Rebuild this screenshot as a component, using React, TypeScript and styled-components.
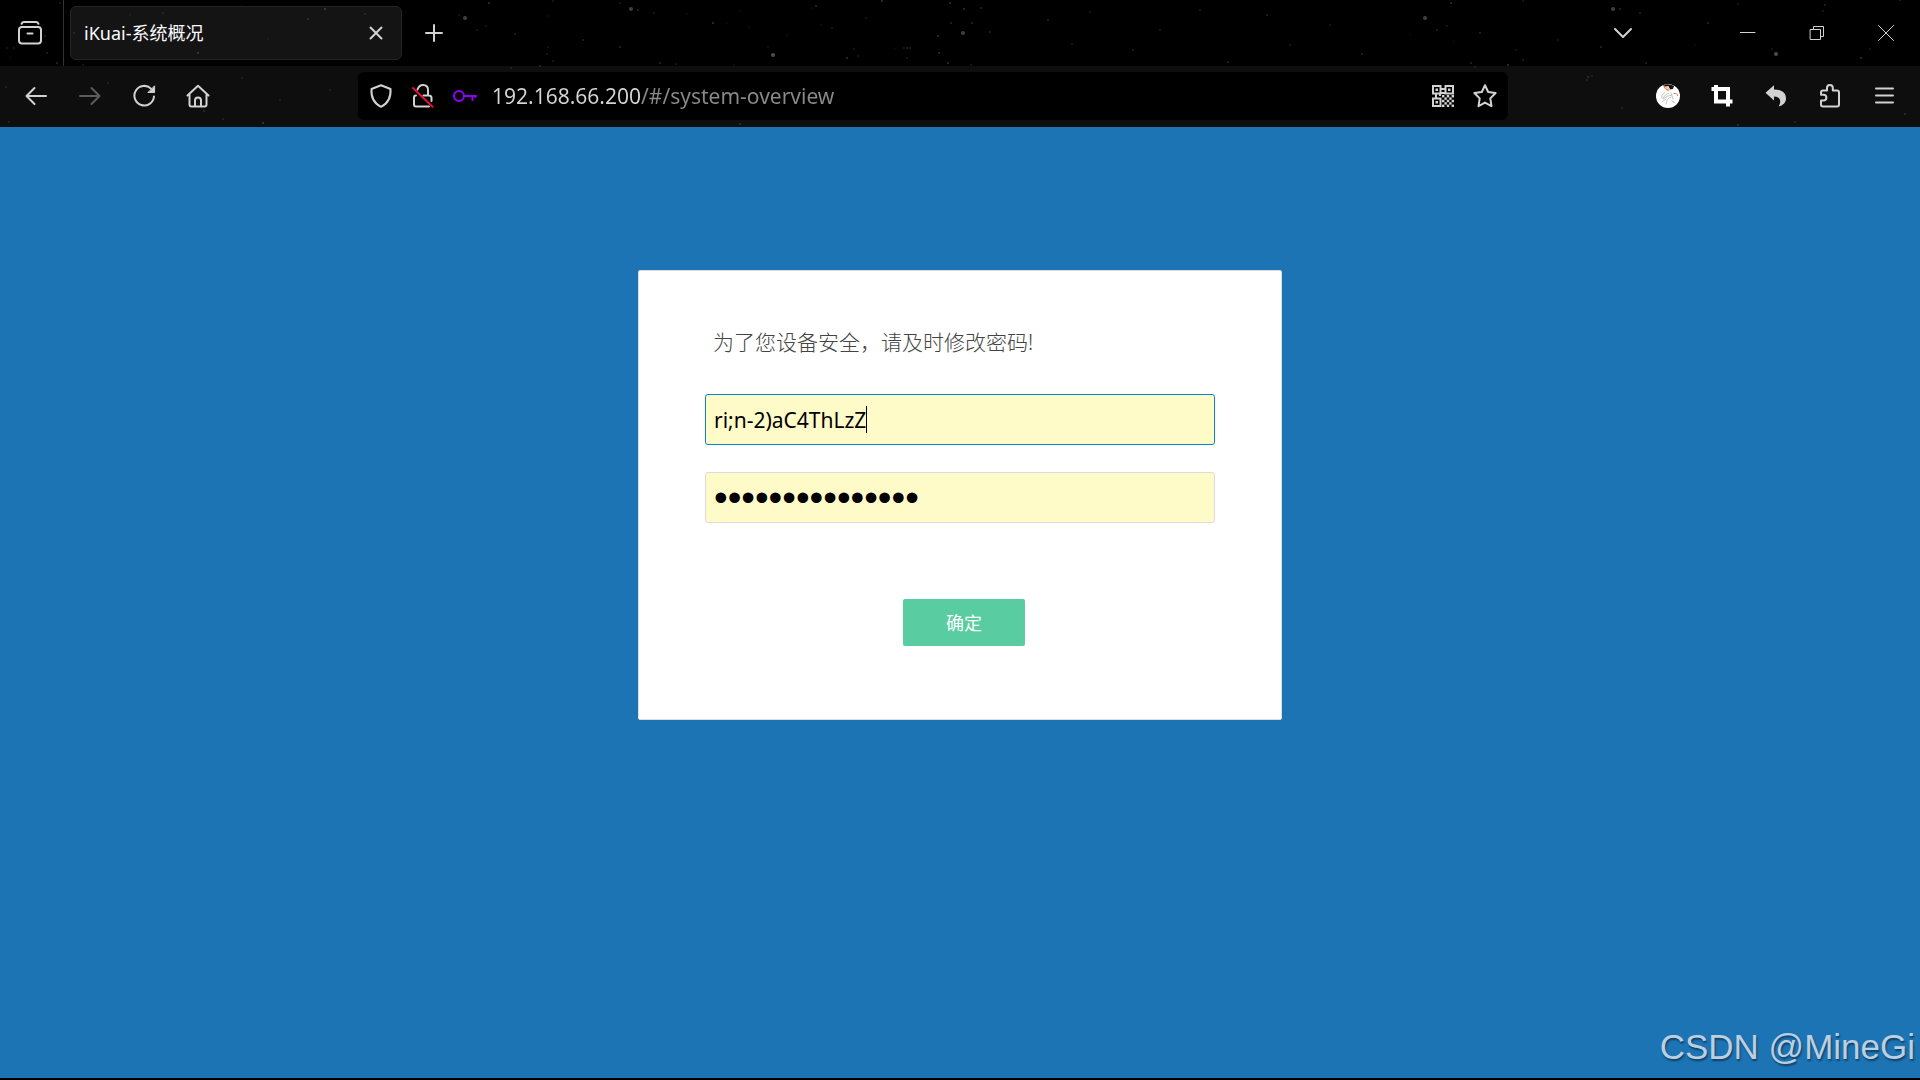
import React, { useLayoutEffect, useRef, useState } from 'react';
import styled, { createGlobalStyle } from 'styled-components';

const uiFont = '"Noto Sans", "Noto Sans CJK SC", sans-serif';

const GlobalStyle = createGlobalStyle`
  * { box-sizing: border-box; }
  body { margin: 0; background: #000; font-family: ${uiFont}; }
  button, input { font-family: inherit; }
`;

const Window = styled.div`
  min-height: 100vh;
  display: flex;
  flex-direction: column;
  border-bottom: 2px solid #000;
`;

/* ---------- browser chrome ---------- */

const Chrome = styled.header`
  position: relative;
  isolation: isolate;
  background: #000;
`;

const StarField = styled.svg`
  position: absolute;
  inset: 0;
  z-index: -1;
`;

const TabBar = styled.div`
  display: flex;
  align-items: stretch;
  height: 66px;
`;

const IconButton = styled.button<{ $width?: number; $dim?: boolean }>`
  flex: none;
  display: flex;
  align-items: center;
  justify-content: center;
  width: ${(p) => p.$width ?? 54}px;
  padding: 0;
  border: 0;
  background: none;
  color: ${(p) => (p.$dim ? '#5c5c5c' : '#d2d2d2')};
`;

const ViewSlot = styled.div`
  display: flex;
  padding: 0 9px 0 6px;
  border-right: 1px solid #333;
`;

const Tab = styled.div`
  display: flex;
  align-items: center;
  width: 332px;
  margin: 6px 8px 6px 6px;
  padding: 0 7px 0 13px;
  border: 1px solid #242424;
  border-radius: 6px;
  background: rgba(255, 255, 255, 0.08);
  color: #fbfbfe;
`;

const TabTitle = styled.span`
  flex: 1;
  font-size: 18px;
  line-height: 24px;
  white-space: nowrap;
`;

const WindowControls = styled.div`
  display: flex;
  margin-left: auto;
`;

const ListTabs = styled.div`
  display: flex;
  margin-right: 66px;
`;

const Toolbar = styled.nav`
  display: flex;
  align-items: stretch;
  height: 61px;
  padding: 6px 9px 7px;
  background: rgba(255, 255, 255, 0.055);
`;

const AddressBar = styled.div`
  flex: 1;
  display: flex;
  margin: 0 133px;
  padding: 0 2px;
  border-radius: 6px;
  background: #000;
`;

const AddressInput = styled.input`
  flex: 1;
  min-width: 0;
  padding: 0 0 0 6px;
  border: 0;
  outline: 0;
  font-size: 21px;
  line-height: 28px;
  color: #8a8a8a;
  background-color: transparent;
  -webkit-background-clip: text;
  background-clip: text;
  -webkit-text-fill-color: transparent;
`;

/* ---------- page ---------- */

const Page = styled.main`
  flex: 1;
  display: flex;
  flex-direction: column;
  background: #1d74b4;
`;

const Card = styled.form`
  width: 644px;
  max-width: 100%;
  margin: 143px auto 0;
  padding: 55px 66px 73px;
  border: 1px solid #ddd;
  border-radius: 2px;
  background: #fff;
`;

const Notice = styled.p`
  margin: 0 0 36px;
  padding-left: 8px;
  font-size: 21px;
  font-weight: 300;
  line-height: 32px;
  color: #444;
`;

const Field = styled.div`
  position: relative;
  margin-bottom: 27px;
`;

const TextBox = styled.input<{ $active?: boolean }>`
  display: block;
  width: 100%;
  height: 51px;
  padding: 0 8px;
  border: 1px solid ${(p) => (p.$active ? '#0a84c8' : '#dcdcdc')};
  border-radius: 3px;
  outline: 0;
  background: #fffbc8;
  color: #000;
  caret-color: transparent;
  font-size: 21px;
`;

const MaskedBox = styled(TextBox)`
  font-family: "Liberation Sans", sans-serif;
  font-size: 39px;
`;

const Caret = styled.span`
  position: absolute;
  top: 12px;
  width: 1px;
  height: 27px;
  background: #000;
`;

const Actions = styled.div`
  margin-top: 76px;
  padding-left: 198px;
`;

const SubmitButton = styled.button`
  display: block;
  width: 122px;
  height: 47px;
  padding: 0 0 2px;
  border: 0;
  border-radius: 2px;
  background: #5acca2;
  color: #fff;
  font-size: 18px;
  font-weight: 400;
`;

const Watermark = styled.div`
  margin: auto 5px 9px 0;
  align-self: flex-end;
  font-family: "Liberation Sans", Arial, sans-serif;
  font-size: 35px;
  line-height: 44px;
  color: #bccfe0;
  text-shadow: 1px 2px 2px rgba(0, 0, 0, 0.45);
`;

/* ---------- drawings ---------- */

const Icon = ({ children, size = 24, width = 2 }: { children: React.ReactNode; size?: number; width?: number }) => (
  <svg width={size} height={size} viewBox={`0 0 ${size} ${size}`} fill="none" stroke="currentColor"
    strokeWidth={width} strokeLinecap="round" strokeLinejoin="round" aria-hidden="true">
    {children}
  </svg>
);

// x, y, brightness of each speck in the theme's night sky
const stars: [number, number, number][] = [
  [60, 3, 2], [45, 36, 3], [14, 48, 2], [10, 57, 1], [47, 53, 3], [57, 63, 3], [83, 65, 2], [74, 33, 2], [7, 48, 2],
  [163, 13, 2], [130, 15, 1], [325, 9, 4], [308, 19, 3], [198, 53, 4], [365, 14, 2], [268, 39, 1], [242, 6, 1],
  [465, 18, 5], [459, 15, 2], [477, 30, 2], [489, 3, 4], [486, 26, 2], [515, 34, 3], [548, 47, 2], [583, 40, 3],
  [547, 54, 2], [553, 61, 2], [540, 66, 3], [511, 68, 2], [553, 1, 2], [547, 16, 1], [620, 3, 2], [620, 47, 3],
  [654, 13, 2], [631, 9, 5], [638, 10, 3], [687, 14, 1], [713, 23, 4], [727, 23, 1], [749, 27, 1], [740, 11, 1],
  [660, 63, 3], [676, 64, 2], [734, 65, 1], [773, 55, 6], [768, 47, 1], [787, 35, 1], [816, 6, 4], [811, 8, 1],
  [821, 25, 1], [832, 28, 2], [866, 18, 2], [847, 58, 4], [854, 49, 2], [858, 56, 2], [882, 1, 4], [907, 48, 3],
  [904, 48, 2], [895, 49, 1], [910, 48, 3], [907, 58, 2], [938, 36, 4], [939, 53, 4], [948, 63, 4], [951, 23, 3],
  [963, 33, 5], [972, 23, 3], [950, 3, 4], [964, 9, 4], [981, 8, 3], [990, 32, 3], [971, 65, 2],
  [1048, 20, 3], [1072, 44, 2], [1090, 12, 2], [1133, 50, 3], [1160, 30, 2], [1200, 10, 2], [1228, 62, 3],
  [1267, 15, 3], [1290, 45, 2], [1330, 25, 2], [1362, 54, 3], [1425, 18, 5], [1451, 3, 4], [1437, 30, 3],
  [1447, 26, 2], [1410, 35, 1], [1480, 33, 3], [1471, 63, 3], [1508, 65, 4], [1454, 41, 1], [1523, 60, 3],
  [1475, 67, 2], [1516, 50, 2], [1523, 1, 2], [1558, 40, 2], [1613, 9, 5], [1620, 9, 3], [1640, 13, 3],
  [1601, 47, 3], [1646, 63, 3], [1708, 23, 3], [1776, 54, 6], [1772, 49, 2], [1695, 45, 1], [1738, 4, 2],
  [1825, 5, 3], [1823, 11, 2], [1861, 58, 4], [1900, 0, 3], [1870, 49, 2], [1588, 77, 3], [1592, 76, 2],
  [1587, 80, 2], [1738, 125, 3], [1905, 114, 3], [1795, 122, 2], [1622, 108, 2], [204, 111, 3], [223, 119, 2],
  [263, 123, 4], [242, 78, 2], [280, 100, 2], [330, 90, 2], [740, 124, 3], [6, 87, 2], [9, 122, 2], [108, 83, 2],
];

const NightSky = () => (
  <StarField width="100%" height="100%" aria-hidden="true">
    {stars.map(([x, y, b], i) => (
      <circle key={i} cx={x} cy={y} r={b > 4 ? 2 : 1} fill="#fff" opacity={b * 0.05} />
    ))}
  </StarField>
);

const FirefoxViewIcon = () => (
  <Icon>
    <path d="M3.5 2.8Q4.2 1 6.2 1H17.8Q19.8 1 20.5 2.8" />
    <rect x="1" y="6" width="22" height="16.5" rx="3" />
    <path d="M9.5 12.5h5" />
  </Icon>
);
const BackIcon = () => <Icon><path d="M2.5 12H22M10.5 4l-8 8 8 8" /></Icon>;
const ForwardIcon = () => <Icon><path d="M2 12h19.500M13.500 4l8 8-8 8" /></Icon>;
const ReloadIcon = () => (
  <Icon>
    <path d="M22 12.500A9.800 9.800 0 1 1 19 4.600" />
    <path d="M22.600 2.200V8.500H16.300Z" fill="currentColor" strokeWidth="1" />
  </Icon>
);
const HomeIcon = () => (
  <Icon>
    <path d="M1.500 11.500L12 1.800 22.500 11.500M3.500 10V20.500Q3.500 22.500 5.500 22.500H18.500Q20.500 22.500 20.500 20.500V10" />
    <path d="M9 22V16.500A3 3 0 0 1 15 16.500V22" />
  </Icon>
);
const ShieldIcon = () => (
  <Icon><path d="M12 1.200L21.500 5Q22.500 17.500 12 22.800 1.500 17.500 2.500 5Z" /></Icon>
);
const InsecureIcon = () => (
  <Icon>
    <path d="M6.500 5.500Q8 1 12 1 17 1 17 6V11M5 11.500Q3 11.500 3 13.500V20.500Q3 22.500 5 22.500H18M12.500 11.500H18Q20.500 11.500 20.500 14V17" />
    <path d="M2 4L21.500 22.800" stroke="#e8103c" />
  </Icon>
);
const KeyIcon = () => (
  <Icon>
    <g stroke="#9000ff">
      <circle cx="6" cy="12" r="5" />
      <path d="M11 12H23M19.500 12V16M22.500 12V13" />
    </g>
  </Icon>
);
const QrIcon = () => (
  <Icon width={2}>
    <g strokeLinejoin="miter">
      <rect x="2" y="2" width="7.500" height="7.500" />
      <rect x="14.500" y="2" width="7.500" height="7.500" />
      <rect x="2" y="14.500" width="7.500" height="7.500" />
    </g>
    <g fill="currentColor" stroke="none">
      <path d="M4.500 4.500h2.500v2.500h-2.500zM17 4.500h2.500v2.500h-2.500zM4.500 17h2.500v2.500h-2.500zM10 4h4v2h-4zM10 8h4v2h-4zM4 10h2v4h-2zM8 10h2v2h-2z" />
      {Array.from({ length: 25 }, (_, i) => i).filter((i) => (Math.floor(i / 5) + i % 5) % 2 === 0).map((i) => (
        <rect key={i} x={11 + (i % 5) * 2.4} y={11 + Math.floor(i / 5) * 2.4} width="2.400" height="2.400" />
      ))}
    </g>
  </Icon>
);
const StarIcon = () => (
  <Icon>
    <path d="M12 1.200L15.200 8 22.600 9 17.300 14.400 18.500 22.200 12 18.600 5.500 22.200 6.700 14.400 1.400 9 8.800 8Z" />
  </Icon>
);
const AvatarIcon = () => (
  <Icon width={1}>
    <circle cx="12" cy="12" r="12" fill="#fff" stroke="none" />
    <path d="M7 1.200Q12-1 18 1.800L17 5 14 5.500 12.500 2 9 3Z" fill="#191313" stroke="none" />
    <path d="M8.500 2.500L12 2.500 14.500 6 12 7.500 9.500 6Z" fill="#f3c7ad" stroke="none" />
    <path d="M8 1.500L8.500 4M10 5l2 1.500M18 9.500q3-1 3.500 2M16.500 17l1.500 1.500" stroke="#df7748" />
    <path d="M9 8Q5 11 5.500 14M13 9q-4 1-6 5M7 15q5-4 9-4M10 20q1-6 5-7M6 18l4-3M15 9l2 6" stroke="#c4c4c4" />
  </Icon>
);
const CropIcon = () => (
  <Icon width={4}>
    <path d="M1.500 5H18V22.500M6 1V17.500H22.500" stroke="#fff" strokeLinecap="butt" strokeLinejoin="miter" />
  </Icon>
);
const UndoIcon = () => (
  <Icon>
    <path d="M1.500 8.800L10 1.200V5.500C18 5.500 22 9 22 14.500 22 18.500 19 21.500 14.500 22.500 17.500 18 17 12.500 10 12.500V16.500Z" fill="currentColor" stroke="none" />
  </Icon>
);
const PuzzleIcon = () => (
  <Icon>
    <path d="M9 6.500V4A2.900 2.900 0 0 1 14.800 4V6.500H19Q21 6.500 21 8.500V20.500Q21 22.500 19 22.500H5Q3 22.500 3 20.500V16.500H5.500A2.900 2.900 0 0 0 5.500 10.700H3V8.500Q3 6.500 5 6.500Z" />
  </Icon>
);
const MenuIcon = () => <Icon><path d="M4 4.500H21M4 11.500H21M4 18.500H21" /></Icon>;
const CloseTabIcon = () => <Icon size={14}><path d="M1.500 1.500l11 11M12.500 1.500l-11 11" /></Icon>;
const PlusIcon = () => <Icon size={20}><path d="M10 2v16M2 10h16" /></Icon>;
const ChevronIcon = () => <Icon size={20}><path d="M2 6l8 8 8-8" /></Icon>;
const MinimizeIcon = () => <Icon size={16} width={1}><path d="M0 7.500H15" /></Icon>;
const RestoreIcon = () => (
  <Icon size={16} width={1}>
    <path d="M1.500 4.500h10v10h-10zM4.500 4.500v-3h10v10h-3" strokeLinejoin="miter" />
  </Icon>
);
const CloseWindowIcon = () => <Icon size={18} width={1}><path d="M1.500 1.500l15 15M16.500 1.500l-15 15" /></Icon>;

/* ---------- behaviour ---------- */

// Width of a piece of text in the font of the given input.
function useTextWidth(text: string) {
  const ref = useRef<HTMLInputElement>(null);
  const [width, setWidth] = useState(0);
  useLayoutEffect(() => {
    const ctx = document.createElement('canvas').getContext('2d');
    if (!ref.current || !ctx) return;
    const s = getComputedStyle(ref.current);
    ctx.font = `${s.fontWeight} ${s.fontSize} ${s.fontFamily}`;
    setWidth(Math.round(ctx.measureText(text).width));
  }, [text]);
  return [ref, width] as const;
}

const Address = () => {
  const [url, setUrl] = useState('192.168.66.200/#/system-overview');
  const [ref, hostWidth] = useTextWidth(url.split('/')[0]);
  const edge = hostWidth + 6;
  return (
    <AddressInput
      ref={ref}
      aria-label="Address"
      value={url}
      onChange={(e) => setUrl(e.target.value)}
      style={{ backgroundImage: `linear-gradient(to right, #d6d6d6 ${edge}px, #8a8a8a ${edge}px)` }}
    />
  );
};

const PasswordForm = () => {
  const [password, setPassword] = useState('ri;n-2)aC4ThLzZ');
  const [confirm, setConfirm] = useState('ri;n-2)aC4ThLzZ');
  const [ref, textWidth] = useTextWidth(password);
  return (
    <Card onSubmit={(e) => e.preventDefault()}>
      <Notice>为了您设备安全，请及时修改密码!</Notice>
      <Field>
        <TextBox ref={ref} $active aria-label="新密码" value={password} onChange={(e) => setPassword(e.target.value)} />
        <Caret style={{ left: textWidth + 9 }} />
      </Field>
      <Field>
        <MaskedBox type="password" aria-label="确认密码" value={confirm} onChange={(e) => setConfirm(e.target.value)} />
      </Field>
      <Actions>
        <SubmitButton type="submit">确定</SubmitButton>
      </Actions>
    </Card>
  );
};

export default function App() {
  return (
    <>
      <GlobalStyle />
      <Window>
        <Chrome>
          <NightSky />
          <TabBar>
            <ViewSlot>
              <IconButton $width={48} aria-label="View"><FirefoxViewIcon /></IconButton>
            </ViewSlot>
            <Tab>
              <TabTitle>iKuai-系统概况</TabTitle>
              <IconButton $width={36} aria-label="Close tab"><CloseTabIcon /></IconButton>
            </Tab>
            <IconButton $width={48} aria-label="New tab"><PlusIcon /></IconButton>
            <WindowControls>
              <ListTabs>
                <IconButton $width={48} aria-label="List all tabs"><ChevronIcon /></IconButton>
              </ListTabs>
              <IconButton $width={69} aria-label="Minimize"><MinimizeIcon /></IconButton>
              <IconButton $width={69} aria-label="Restore"><RestoreIcon /></IconButton>
              <IconButton $width={69} aria-label="Close"><CloseWindowIcon /></IconButton>
            </WindowControls>
          </TabBar>
          <Toolbar>
            <IconButton aria-label="Back"><BackIcon /></IconButton>
            <IconButton $dim aria-label="Forward"><ForwardIcon /></IconButton>
            <IconButton aria-label="Reload"><ReloadIcon /></IconButton>
            <IconButton aria-label="Home"><HomeIcon /></IconButton>
            <AddressBar>
              <IconButton $width={42} aria-label="Protection"><ShieldIcon /></IconButton>
              <IconButton $width={42} aria-label="Connection"><InsecureIcon /></IconButton>
              <IconButton $width={42} aria-label="Saved logins"><KeyIcon /></IconButton>
              <Address />
              <IconButton $width={42} aria-label="QR code"><QrIcon /></IconButton>
              <IconButton $width={42} aria-label="Bookmark"><StarIcon /></IconButton>
            </AddressBar>
            <IconButton aria-label="Profile"><AvatarIcon /></IconButton>
            <IconButton aria-label="Crop"><CropIcon /></IconButton>
            <IconButton aria-label="Undo"><UndoIcon /></IconButton>
            <IconButton aria-label="Extensions"><PuzzleIcon /></IconButton>
            <IconButton aria-label="Menu"><MenuIcon /></IconButton>
          </Toolbar>
        </Chrome>
        <Page>
          <PasswordForm />
          <Watermark>CSDN @MineGi</Watermark>
        </Page>
      </Window>
    </>
  );
}
